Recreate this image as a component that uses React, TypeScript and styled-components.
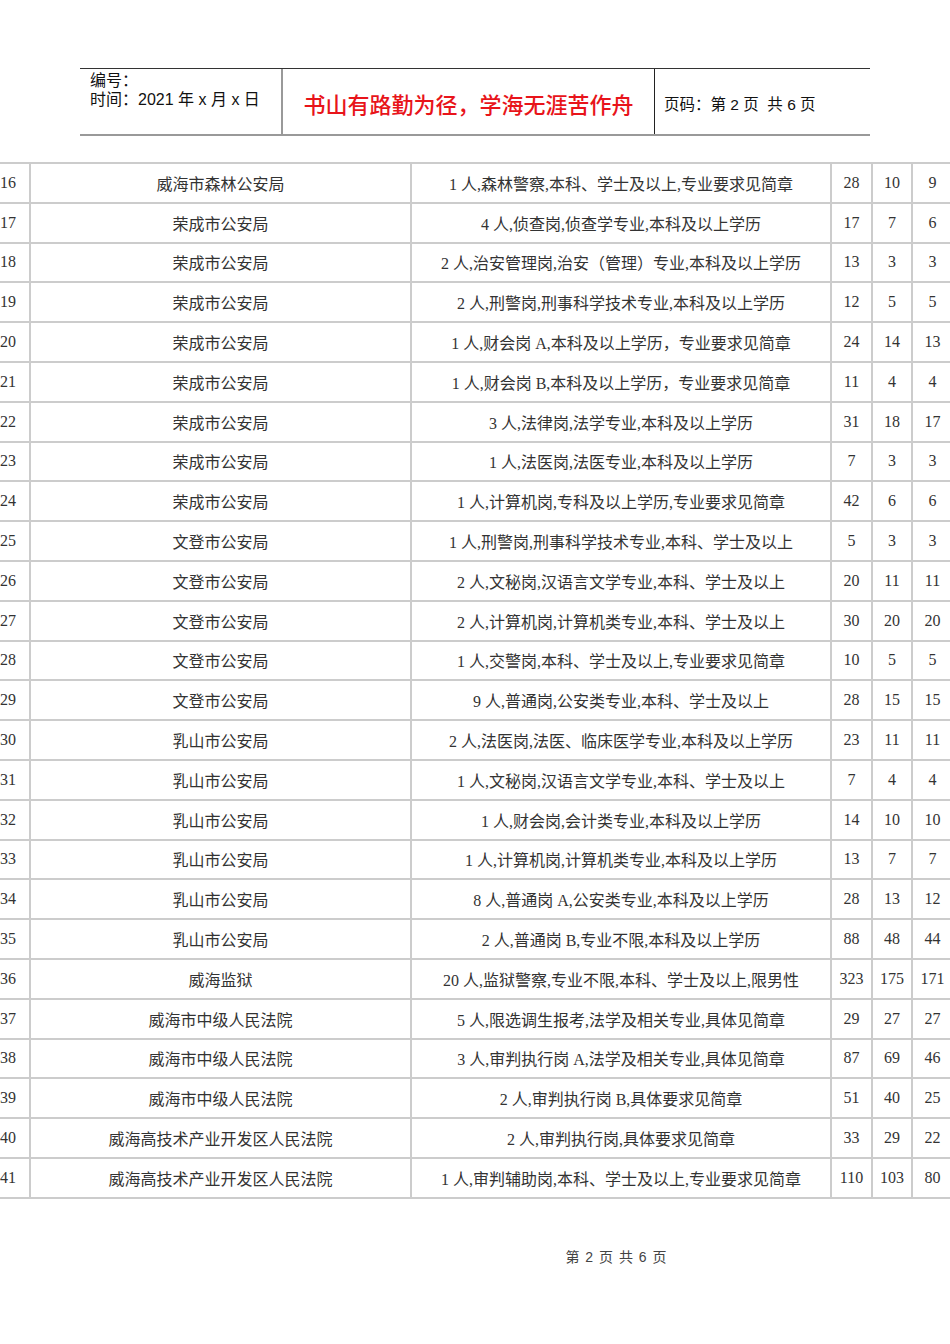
import styled, { createGlobalStyle } from "styled-components";

const GlobalStyle = createGlobalStyle`
  html, body {
    margin: 0;
    padding: 0;
    background: #ffffff;
  }
`;

const Page = styled.div`
  width: 950px;
  min-height: 1344px;
  overflow: hidden;
  background: #fff;
  font-family: "Liberation Serif", "Noto Sans CJK SC", serif;
  color: #222;
`;

const Header = styled.div`
  margin: 68px 0 0 80px;
  width: 790px;
  height: 68px;
  display: grid;
  grid-template-columns: 201px 373px 216px;
  border-top: 1px solid #333;
  border-bottom: 2px solid #999;
  box-sizing: border-box;
  font-family: "Liberation Sans", "Noto Sans CJK SC", sans-serif;
`;

const MetaCell = styled.div`
  padding: 2px 0 0 10px;
  font-size: 16px;
  line-height: 19px;
  color: #111;
`;

const MottoCell = styled.div`
  border-left: 2px solid #999;
  display: flex;
  align-items: center;
  justify-content: center;
  padding-top: 2px;
  color: #e8141a;
  font-size: 22px;
  font-weight: 500;
`;

const PageCell = styled.div`
  border-left: 1px solid #222;
  display: flex;
  align-items: center;
  padding: 2px 0 0 9px;
  font-size: 15.5px;
  color: #111;
`;

const Table = styled.table`
  margin-top: 26px;
  margin-left: -2px;
  width: 954px;
  border-collapse: collapse;
  table-layout: fixed;
`;

const Row = styled.tr`
  height: 39.8px;
`;

const Cell = styled.td<{ $align?: "left" | "center" }>`
  border: 2px solid #cccccc;
  padding: 0;
  font-size: 16px;
  text-align: ${(p) => p.$align ?? "center"};
  vertical-align: middle;
  white-space: nowrap;
  overflow: hidden;
  color: #333;
`;

const Footer = styled.div`
  margin-top: 47px;
  padding-left: 282px;
  text-align: center;
  font-family: "Liberation Sans", "Noto Sans CJK SC", sans-serif;
  font-size: 14px;
  color: #444;
  word-spacing: 2px;
`;

type Job = [number, string, string, number, number, number];

const rows: Job[] = [
  [16, "威海市森林公安局", "1 人,森林警察,本科、学士及以上,专业要求见简章", 28, 10, 9],
  [17, "荣成市公安局", "4 人,侦查岗,侦查学专业,本科及以上学历", 17, 7, 6],
  [18, "荣成市公安局", "2 人,治安管理岗,治安（管理）专业,本科及以上学历", 13, 3, 3],
  [19, "荣成市公安局", "2 人,刑警岗,刑事科学技术专业,本科及以上学历", 12, 5, 5],
  [20, "荣成市公安局", "1 人,财会岗 A,本科及以上学历，专业要求见简章", 24, 14, 13],
  [21, "荣成市公安局", "1 人,财会岗 B,本科及以上学历，专业要求见简章", 11, 4, 4],
  [22, "荣成市公安局", "3 人,法律岗,法学专业,本科及以上学历", 31, 18, 17],
  [23, "荣成市公安局", "1 人,法医岗,法医专业,本科及以上学历", 7, 3, 3],
  [24, "荣成市公安局", "1 人,计算机岗,专科及以上学历,专业要求见简章", 42, 6, 6],
  [25, "文登市公安局", "1 人,刑警岗,刑事科学技术专业,本科、学士及以上", 5, 3, 3],
  [26, "文登市公安局", "2 人,文秘岗,汉语言文学专业,本科、学士及以上", 20, 11, 11],
  [27, "文登市公安局", "2 人,计算机岗,计算机类专业,本科、学士及以上", 30, 20, 20],
  [28, "文登市公安局", "1 人,交警岗,本科、学士及以上,专业要求见简章", 10, 5, 5],
  [29, "文登市公安局", "9 人,普通岗,公安类专业,本科、学士及以上", 28, 15, 15],
  [30, "乳山市公安局", "2 人,法医岗,法医、临床医学专业,本科及以上学历", 23, 11, 11],
  [31, "乳山市公安局", "1 人,文秘岗,汉语言文学专业,本科、学士及以上", 7, 4, 4],
  [32, "乳山市公安局", "1 人,财会岗,会计类专业,本科及以上学历", 14, 10, 10],
  [33, "乳山市公安局", "1 人,计算机岗,计算机类专业,本科及以上学历", 13, 7, 7],
  [34, "乳山市公安局", "8 人,普通岗 A,公安类专业,本科及以上学历", 28, 13, 12],
  [35, "乳山市公安局", "2 人,普通岗 B,专业不限,本科及以上学历", 88, 48, 44],
  [36, "威海监狱", "20 人,监狱警察,专业不限,本科、学士及以上,限男性", 323, 175, 171],
  [37, "威海市中级人民法院", "5 人,限选调生报考,法学及相关专业,具体见简章", 29, 27, 27],
  [38, "威海市中级人民法院", "3 人,审判执行岗 A,法学及相关专业,具体见简章", 87, 69, 46],
  [39, "威海市中级人民法院", "2 人,审判执行岗 B,具体要求见简章", 51, 40, 25],
  [40, "威海高技术产业开发区人民法院", "2 人,审判执行岗,具体要求见简章", 33, 29, 22],
  [41, "威海高技术产业开发区人民法院", "1 人,审判辅助岗,本科、学士及以上,专业要求见简章", 110, 103, 80],
];

export default function App() {
  return (
    <Page>
      <GlobalStyle />
      <Header>
        <MetaCell>
          编号：
          <br />
          时间：2021 年 x 月 x 日
        </MetaCell>
        <MottoCell>书山有路勤为径，学海无涯苦作舟</MottoCell>
        <PageCell>页码：第 2 页&nbsp;&nbsp;共 6 页</PageCell>
      </Header>
      <Table>
        <colgroup>
          <col style={{ width: 31 }} />
          <col style={{ width: 381 }} />
          <col style={{ width: 420 }} />
          <col style={{ width: 41 }} />
          <col style={{ width: 40 }} />
          <col style={{ width: 41 }} />
        </colgroup>
        <tbody>
          {rows.map(([no, unit, post, a, b, c]) => (
            <Row key={no}>
              <Cell $align="left">{no}</Cell>
              <Cell>{unit}</Cell>
              <Cell>{post}</Cell>
              <Cell>{a}</Cell>
              <Cell>{b}</Cell>
              <Cell>{c}</Cell>
            </Row>
          ))}
        </tbody>
      </Table>
      <Footer>第 2 页 共 6 页</Footer>
    </Page>
  );
}
